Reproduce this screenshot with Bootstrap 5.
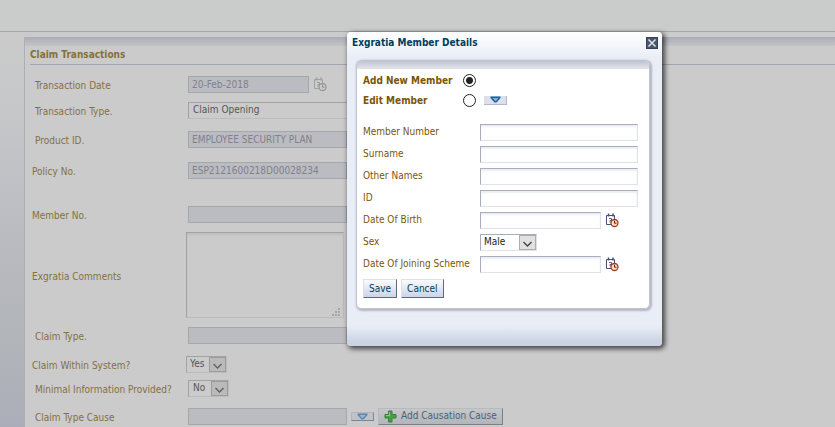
<!DOCTYPE html>
<html lang="en">
<head>
<meta charset="utf-8">
<meta name="viewport" content="width=device-width, initial-scale=1">
<title>Claim Transactions</title>
<link href="https://cdn.jsdelivr.net/npm/bootstrap@5.3.0/dist/css/bootstrap.min.css" rel="stylesheet">
<style>
  body { font-family: Tahoma, "DejaVu Sans Condensed", "DejaVu Sans", sans-serif; font-size: 10px; line-height: 14px; background: #cbcbcb; color: #85703e; overflow: hidden; }
  .top-strip { height: 32px; flex: none; background: linear-gradient(#c9cccb, #c9cccb 70%, #cbcbcb); border-bottom: 1px solid #a3a5b3; }
  .side-strip { width: 24px; flex: none; background: linear-gradient(#cbcbcb, #c6c7c9 20%, #b9bac0 55%, #b2b5b9 75%, #abadb9); }
  .claim-panel { margin-top: 5px; border-left: 1px solid #adafb7; }
  .claim-band { height: 9px; background: linear-gradient(#acadb6, #c3c3c6); }
  .claim-title { font-size: 10px; line-height: 18px; font-weight: 700; margin-left: 5px; border-bottom: 1px solid #9fa5b1; }
  .claim-form { padding-top: 5px; }
  .form-line { display: flex; align-items: center; }
  .claim-form .form-line { padding-left: 10px; }
  .claim-form .form-line > label { width: 153px; flex: none; padding-top: 3px; }
  .claim-form .outdent { padding-left: 7px; }
  .claim-form .outdent > label { width: 154px; }
  .claim-form .outdent.wide-label > label { width: 156px; }
  .h24 { height: 24px; } .h26 { height: 26px; } .h28 { height: 28px; } .h32 { height: 32px; } .h34 { height: 34px; } .h94 { height: 94px; }
  input[type=text], select, textarea { font: inherit; border: 1px solid; border-radius: 0; outline: 0; }
  input[type=text], select { height: 17px; padding: 0 3px; }
  .dim { width: 159px; background: #bbbcc1; border-color: #a6a7ab !important; color: #7f818b; }
  .date-dim { width: 121px; }
  .paper-dim { background-color: #cbcbcb; border-color: #a0a2a6 #bcbcbc #bcbcbc #a0a2a6 !important; color: #54565a; }
  .comments { width: 158px; height: 86px; resize: none; display: block; box-shadow: inset 0 2px 2px #bfbfbf; }
  .grip { right: 4px; bottom: 2px; }
  select { appearance: none; background-repeat: no-repeat; background-position: right 0 top 0; }
  .pick-dim { width: 41px; background-image: url("data:image/svg+xml,%3Csvg xmlns='http://www.w3.org/2000/svg' width='17' height='15'%3E%3Crect x='.5' y='.5' width='16' height='14' fill='%23bababa' stroke='%239c9c9c'/%3E%3Cpath d='M4.500 7l4 4 4-4' fill='none' stroke='%23606060' stroke-width='1.300'/%3E%3C/svg%3E"); }
  .pick { width: 57px; background-color: #fff; background-image: url("data:image/svg+xml,%3Csvg xmlns='http://www.w3.org/2000/svg' width='17' height='15'%3E%3Crect x='.5' y='.5' width='16' height='14' fill='%23e1e1e1' stroke='%23adadad'/%3E%3Cpath d='M4.500 7l4 4 4-4' fill='none' stroke='%23404040' stroke-width='1.300'/%3E%3C/svg%3E"); }
  .type-pick { width: 212px; }
  .type-pick, .pick-dim.ps-1 { padding-left: 4px; }
  .icon-btn { border: 0; padding: 0; background: none; line-height: 0; }
  .drop-btn { width: 23px; height: 9px; border: 0; padding: 0; background: #dbe1ea; border-bottom: 1px solid #b4bac8; border-right: 1px solid #b4bac8; display: flex; justify-content: center; align-items: center; }
  .drop-dim { background: #bfc2c6; border: 1px solid #b3b5b8; border-right-color: #83868f; border-bottom-color: #83868f; }
  .cause-btn { height: 17px; border: 1px solid #b8babd; border-right-color: #7d808a; border-bottom-color: #7d808a; background: linear-gradient(#c6c7c8, #b2b5bc); color: #456477; padding: 0 5px; }

  .member-box { left: 347px; top: 32px; width: 315px; border-radius: 4px; padding: 0 12px 37px 9px; color: #7a5605; background: linear-gradient(#fff, #e9edf6 26px, #e9edf6 calc(100% - 20px), #cdd5e5 calc(100% - 5px), #c9d3e3); box-shadow: 2px 2px 5px 1px rgba(0,0,0,.65); }
  .member-head { height: 28px; padding-bottom: 6px; margin: 0 -8px 0 -4px; }
  .member-head h2 { font-size: 10px; line-height: 16px; font-weight: 700; color: #003d5b; }
  .member-panel { background: #fff; border: 1px solid #c0c5d3; border-radius: 5px; box-shadow: 1px 1px 2px 1px #b4b8c3; overflow: hidden; padding-bottom: 10px; }
  .member-band { height: 8px; background: linear-gradient(#bfc4d2, #e3e5ec); }
  .member-form { padding: 1px 6px 0; }
  .member-form .form-line { height: 22px; }
  .member-form .form-line > label { width: 117px; flex: none; }
  .member-form .choice { height: 20px; font-weight: 700; }
  .member-form .choice > label { width: 100px; padding-top: 1px; }
  .member-fields { padding-top: 11px; }
  .member-form input[type=radio] { appearance: none; width: 13px; height: 13px; margin: 0; border: 1px solid #222; border-radius: 50%; background: #fff; }
  .member-form input[type=radio]:checked { background: radial-gradient(#222 0 3px, #fff 4px); }
  .member-form input[type=text], .member-form select { border-color: #a7adbd #dfe2e6 #dfe2e6 #a7adbd; color: #222; }
  .member-form input[type=text] { width: 158px; box-shadow: inset 0 2px 2px #eceef1; }
  .member-form input.date-box { width: 121px; }
  .cmd { height: 19px; border: 1px solid #dde1ea; border-right-color: #626a7c; border-bottom-color: #626a7c; background: linear-gradient(#fafbfd, #cbd4e7); color: #003d5b; padding: 0 5px; }
  .close-btn { width: 12px; height: 12px; }
</style>
</head>
<body>
<svg width="0" height="0" class="position-absolute" aria-hidden="true">
  <symbol id="calendar" viewBox="0 0 14 15">
    <path d="M1.500 2.500h8v9h-8z" fill="#fff" stroke="#4d4a78"/>
    <path d="M3.500 .5v3M8 .5v3" stroke="#4d4a78" stroke-width="1.500"/>
    <path d="M4 5.500h2.500v2H5v2" fill="none" stroke="#5c5c88"/>
    <circle cx="9.500" cy="10" r="3.500" fill="#fbe3bd" stroke="#a8382c" stroke-width="1.300"/>
    <path d="M9.500 7.800V10.200h2" fill="none" stroke="#5a1a14"/>
  </symbol>
  <symbol id="calendar-dim" viewBox="0 0 14 15">
    <path d="M1.500 2.500h8v9h-8z" fill="#cbcbcb" stroke="#a0a0a0"/>
    <path d="M3.500 .5v3M8 .5v3" stroke="#a0a0a0" stroke-width="1.500"/>
    <path d="M4 5.500h2.500v2H5v2" fill="none" stroke="#9b9b9b"/>
    <circle cx="9.500" cy="10" r="3.500" fill="#cbcbcb" stroke="#989898" stroke-width="1.300"/>
    <path d="M9.500 7.800V10.200h2" fill="none" stroke="#8c8c8c"/>
  </symbol>
  <symbol id="drop" viewBox="0 0 11 7">
    <path d="M.5 .5h10v1.500L6.500 6.500h-2L.5 2z" fill="#1f5f9e"/>
    <path d="M2.500 2h6L6 5H5z" fill="#72b4e0"/>
  </symbol>
</svg>

<div class="vh-100 d-flex flex-column">
  <header class="top-strip"></header>
  <div class="d-flex flex-grow-1">
    <aside class="side-strip"></aside>
    <main class="claim-panel flex-grow-1">
      <div class="claim-band"></div>
      <h1 class="claim-title mb-0">Claim Transactions</h1>
      <form class="claim-form">
        <div class="form-line h28">
          <label for="tdate">Transaction Date</label>
          <input type="text" id="tdate" class="dim date-dim" value="20-Feb-2018" readonly>
          <button type="button" class="icon-btn ms-1" aria-label="Pick transaction date"><svg width="14" height="15"><use href="#calendar-dim"/></svg></button>
        </div>
        <div class="form-line h24">
          <label for="ttype">Transaction Type.</label>
          <select id="ttype" class="paper-dim type-pick"><option>Claim Opening</option></select>
        </div>
        <div class="form-line h34">
          <label for="product">Product ID.</label>
          <input type="text" id="product" class="dim" value="EMPLOYEE SECURITY PLAN" readonly>
        </div>
        <div class="form-line outdent wide-label h28">
          <label for="policy">Policy No.</label>
          <input type="text" id="policy" class="dim" value="ESP2121600218D00028234" readonly>
        </div>
        <div class="form-line outdent wide-label h28 mt-3">
          <label for="member">Member No.</label>
          <input type="text" id="member" class="dim" readonly>
        </div>
        <div class="form-line outdent h94">
          <label for="comments">Exgratia Comments</label>
          <div class="position-relative">
            <textarea id="comments" class="paper-dim comments"></textarea>
            <svg class="grip position-absolute" width="9" height="9" fill="#a4a4a4"><path d="M7 1h2v2H7zM4 4h2v2H4zM7 4h2v2H7zM1 7h2v2H1zM4 7h2v2H4zM7 7h2v2H7z"/></svg>
          </div>
        </div>
        <div class="form-line h26">
          <label for="ctype">Claim Type.</label>
          <input type="text" id="ctype" class="dim" readonly>
        </div>
        <div class="form-line outdent h28 pt-1">
          <label for="within">Claim Within System?</label>
          <select id="within" class="paper-dim pick-dim"><option>Yes</option><option>No</option></select>
        </div>
        <div class="form-line h24">
          <label for="minimal">Minimal Information Provided?</label>
          <select id="minimal" class="paper-dim pick-dim ps-1"><option>No</option><option>Yes</option></select>
        </div>
        <div class="form-line h32">
          <label for="cause">Claim Type Cause</label>
          <input type="text" id="cause" class="dim" readonly>
          <button type="button" class="drop-btn drop-dim mx-1" aria-label="Choose cause"><svg width="11" height="7" opacity=".6"><use href="#drop"/></svg></button>
          <button type="button" class="cause-btn d-flex align-items-center gap-1">
            <svg width="13" height="13" viewBox="0 0 13 13"><path d="M4.500 1h3.500v3.500h4v3.500h-4v4H4.500V8H1V4.500h3.500z" fill="#45a245" stroke="#3b7c3b"/><path d="M5.500 2v3.500H2" fill="none" stroke="#93c993"/></svg>
            Add Causation Cause
          </button>
        </div>
      </form>
    </main>
  </div>
</div>

<section class="member-box position-absolute" role="dialog" aria-labelledby="member-title">
  <div class="member-head d-flex justify-content-between align-items-center">
    <h2 id="member-title" class="mb-0">Exgratia Member Details</h2>
    <button type="button" class="icon-btn close-btn" aria-label="Close"><svg width="12" height="12"><path d="M0 0h12v12H0z" fill="#34435c"/><path d="M1 1h10v10H1z" fill="#4a566c"/><path d="M2.500 2.500l7 7M9.500 2.500l-7 7" stroke="#dfe3ea" stroke-width="1.500"/></svg></button>
  </div>
  <div class="member-panel">
    <div class="member-band"></div>
    <form class="member-form">
      <div class="form-line choice">
        <label for="add">Add New Member</label>
        <input type="radio" id="add" name="mode" checked>
      </div>
      <div class="form-line choice">
        <label for="edit">Edit Member</label>
        <input type="radio" id="edit" name="mode">
        <button type="button" class="drop-btn ms-2" aria-label="Choose member"><svg width="11" height="7"><use href="#drop"/></svg></button>
      </div>
      <div class="member-fields">
        <div class="form-line"><label for="number">Member Number</label><input type="text" id="number"></div>
        <div class="form-line"><label for="surname">Surname</label><input type="text" id="surname"></div>
        <div class="form-line"><label for="others">Other Names</label><input type="text" id="others"></div>
        <div class="form-line"><label for="idno">ID</label><input type="text" id="idno"></div>
        <div class="form-line">
          <label for="birth">Date Of Birth</label><input type="text" id="birth" class="date-box">
          <button type="button" class="icon-btn ms-1" aria-label="Pick date of birth"><svg width="14" height="15"><use href="#calendar"/></svg></button>
        </div>
        <div class="form-line"><label for="sex">Sex</label><select id="sex" class="pick"><option>Male</option><option>Female</option></select></div>
        <div class="form-line">
          <label for="joining">Date Of Joining Scheme</label><input type="text" id="joining" class="date-box">
          <button type="button" class="icon-btn ms-1" aria-label="Pick joining date"><svg width="14" height="15"><use href="#calendar"/></svg></button>
        </div>
      </div>
      <div class="d-flex gap-1 pt-1">
        <button type="button" class="cmd">Save</button>
        <button type="button" class="cmd">Cancel</button>
      </div>
    </form>
  </div>
</section>
<script src="https://cdn.jsdelivr.net/npm/bootstrap@5.3.0/dist/js/bootstrap.bundle.min.js"></script>
</body>
</html>
